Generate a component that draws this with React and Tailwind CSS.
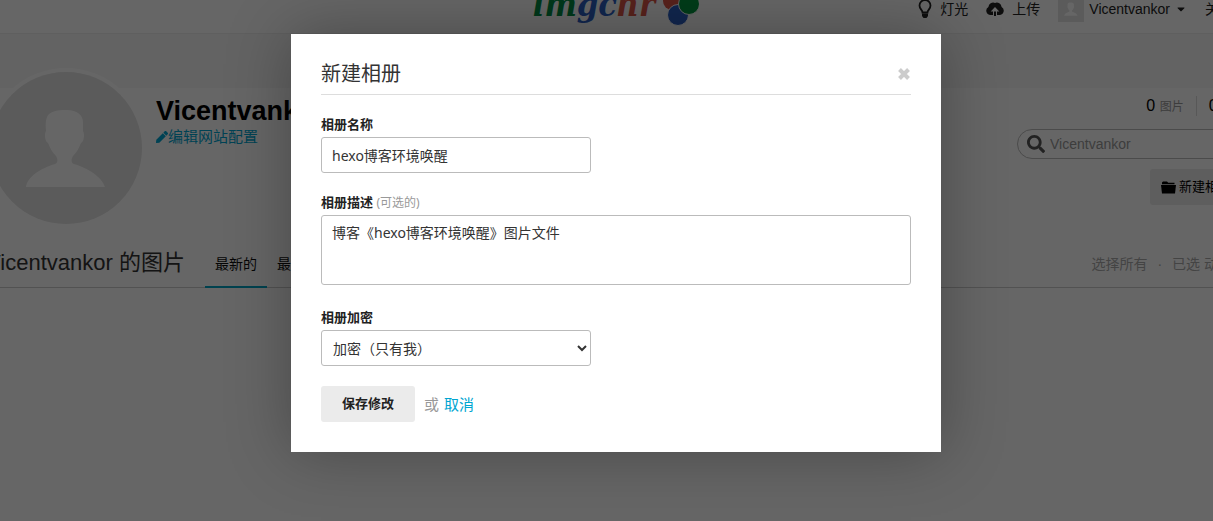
import React from "react";
import { FaCaretDown, FaSearch, FaPen } from "react-icons/fa";

const items = "flex items-center text-[#222]";

function Silhouette({ className }) {
  return (
    <svg viewBox="0 0 152 152" className={className} aria-hidden="true">
      <rect width="152" height="152" fill="#e3e3e3" />
      <path
        d="M36 115c1-10 15-19 29-23 3-1 3-5 1-8-4-4-6-8-8-13-3-1-4-9-2-12-1-8 0-14 3-17 5-4 12-4 18-4 10 0 16 5 16 12v9c2 3 1 11-2 12-2 5-4 9-8 13-2 3-2 7 1 8 14 4 28 13 31 23Z"
        fill="#ffffff"
      />
    </svg>
  );
}

function Bulb() {
  return (
    <svg viewBox="0 0 14 20" className="h-5 w-[14px]" aria-hidden="true">
      <path
        d="M4.500 13.500c0-2.500-3-3.500-3-7a5.500 5.500 0 0 1 11 0c0 3.500-3 4.500-3 7Z"
        fill="none"
        stroke="currentColor"
        strokeWidth="1.800"
      />
      <path d="M4 14.500h6v2.500l-1.500 2h-3L4 17Z" fill="currentColor" />
    </svg>
  );
}

function CloudUpload() {
  return (
    <svg viewBox="0 0 18 16" className="h-4 w-[18px]" aria-hidden="true">
      <path
        d="M4.500 14A4.300 4.300 0 0 1 2.400 6 4.800 4.800 0 0 1 9 2a4.800 4.800 0 0 1 6.600 4 4.300 4.300 0 0 1-2.100 8h-2.500v-3.500h2.300L9 6l-4.300 4.500H7V14Z"
        fill="currentColor"
      />
      <path d="M8 10.500h2V15H8z" fill="currentColor" />
    </svg>
  );
}

function Folder() {
  return (
    <svg viewBox="0 0 15 13" className="h-[13px] w-[15px]" aria-hidden="true">
      <path d="M1 3.200V1.500L2 .5h4l1.200 1.200H13.500v1.500Z" fill="currentColor" />
      <path d="M0 4h15l-1 8.500H1Z" fill="currentColor" />
    </svg>
  );
}

function Logo() {
  return (
    <a href="#home" aria-label="imgchr" className="flex items-center gap-2 pb-[10px]">
      <span className="font-['DejaVu_Serif_Condensed','DejaVu_Serif',serif] text-[34px] leading-[60px] font-bold italic">
        <span className="text-[#008c45]">im</span>
        <span className="text-[#2c5fc4]">gc</span>
        <span className="text-[#dd5548]">hr</span>
      </span>
      <svg viewBox="0 0 36 44" className="h-11 w-9" aria-hidden="true">
        <circle cx="9" cy="19" r="9" fill="#dd5548" />
        <circle cx="15" cy="33" r="10.500" fill="#2c5fc4" stroke="#fff" />
        <circle cx="26" cy="22" r="10.500" fill="#00963f" stroke="#fff" />
      </svg>
    </a>
  );
}

function Header() {
  return (
    <header className="h-[34px] border-b border-[#ededed] bg-white">
      <div className="grid h-[18px] grid-cols-[1fr_auto_1fr] grid-rows-[18px] items-center">
        <span />
        <Logo />
        <nav className="flex items-center justify-end gap-[18px] pr-[13px] text-sm whitespace-nowrap">
          <a href="#light" className={`${items} gap-2`}>
            <Bulb />灯光
          </a>
          <a href="#upload" className={`${items} gap-2`}>
            <CloudUpload />上传
          </a>
          <a href="#user" className={`${items} gap-[5px]`}>
            <Silhouette className="size-[26px]" />
            Vicentvankor
            <FaCaretDown className="size-3" />
          </a>
          <a href="#about" className={items}>关于</a>
        </nav>
      </div>
    </header>
  );
}

function Profile() {
  return (
    <section className="flex h-[202px] items-start bg-linear-to-b from-[#f8f8f8] from-[54px] to-white to-[54px] pt-[34px]">
      <div className="flex shrink-0 gap-[10px]">
        <div className="size-40 overflow-hidden rounded-full border-4 border-white">
          <Silhouette className="size-full" />
        </div>
        <div className="pt-7">
          <h1 className="text-[27px] leading-[30px] font-bold text-black">Vicentvankor</h1>
          <a href="#settings" className="flex items-center text-[15px] leading-[22px] text-[#00a5d1]">
            <FaPen className="size-3" />编辑网站配置
          </a>
        </div>
      </div>
      <div className="ml-auto flex w-[229px] flex-col items-end gap-[10px] pt-[26px]">
        <div className="flex w-full justify-end gap-3 pb-px text-base leading-6 whitespace-nowrap text-black">
          <span>0 <small className="text-xs text-[#999]">图片</small></span>
          <span className="my-0.5 w-px bg-[#dddddd]" />
          <span>0 <small className="text-xs text-[#999]">相册</small></span>
        </div>
        <label className="flex h-[30px] w-full items-center gap-[5px] rounded-full border border-[#bbb] bg-white px-[9px]">
          <FaSearch className="size-[18px] shrink-0 text-[#555]" />
          <input
            type="search"
            aria-label="搜索"
            placeholder="Vicentvankor"
            className="w-full min-w-0 text-sm outline-none placeholder:text-[#999]"
          />
        </label>
        <button className="flex h-9 items-center gap-[3px] rounded-[3px] bg-[#ebebeb] pr-[15px] pl-[11px] text-[13px] text-black">
          <Folder />新建相册
        </button>
      </div>
    </section>
  );
}

function Toolbar() {
  return (
    <div className="flex h-[52px] items-stretch border-b border-[#ccc] whitespace-nowrap">
      <h2 className="pt-3 text-[22px] leading-[30px] text-[#333]">Vicentvankor 的图片</h2>
      <nav className="ml-5 -mb-px flex text-sm text-[#111]">
        <a href="#latest" className="border-b-2 border-[#00a5c5] px-[10px] pt-[18px] leading-5">最新的</a>
        <a href="#oldest" className="px-[10px] pt-[18px] leading-5">最旧</a>
      </nav>
      <div className="ml-auto flex gap-[10px] pt-[18px] pr-[14px] text-sm leading-5 text-[#aaa]">
        <a href="#all">选择所有</a>
        <span>·</span>
        <a href="#selected">已选 动作</a>
      </div>
    </div>
  );
}

const field = "block rounded-[3px] border border-[#bbb] bg-white px-[10px] text-sm text-[#333]";
const label = "mb-1 block text-[13px] leading-[18px] font-bold text-[#222]";

function AlbumDialog() {
  return (
    <form
      role="dialog"
      aria-labelledby="dialog-title"
      onSubmit={(e) => e.preventDefault()}
      className="w-full max-w-[650px] bg-white p-[30px] font-['Noto_Sans','Noto_Sans_CJK_SC',sans-serif] shadow-[0_0_60px_rgba(0,0,0,0.3)]"
    >
      <div className="flex items-center justify-between border-b border-[#ddd] pb-[10px]">
        <h2 id="dialog-title" className="text-xl leading-5 text-[#333]">新建相册</h2>
        <button type="button" aria-label="关闭" className="text-[#ccc]">
          <svg viewBox="0 0 14 14" className="size-[14px]" aria-hidden="true">
            <path d="m2.500 2.500 9 9m0-9-9 9" stroke="currentColor" strokeWidth="4" />
          </svg>
        </button>
      </div>
      <div className="mt-5">
        <label htmlFor="name" className={label}>相册名称</label>
        <input id="name" defaultValue="hexo博客环境唤醒" className={`${field} h-9 w-[270px]`} />
      </div>
      <div className="mt-5">
        <label htmlFor="description" className={label}>
          相册描述 <span className="text-xs font-normal text-[#999]">(可选的)</span>
        </label>
        <textarea
          id="description"
          defaultValue="博客《hexo博客环境唤醒》图片文件"
          className={`${field} h-[70px] w-full resize-none py-[7px] leading-5`}
        />
      </div>
      <div className="mt-[23px]">
        <label htmlFor="privacy" className={label}>相册加密</label>
        <select id="privacy" className="block h-9 w-[270px] rounded-[3px] border border-[#bbb] bg-white pl-[7px] text-sm text-[#333]">
          <option>加密（只有我）</option>
        </select>
      </div>
      <div className="mt-5 flex items-center text-[15px] text-[#999]">
        <button type="submit" className="h-9 rounded-[3px] bg-[#ebebeb] px-[21px] text-[13px] font-bold text-[#222]">
          保存修改
        </button>
        <span className="mr-[5px] ml-[9px]">或</span>
        <a href="#cancel" className="text-[#00a5d1]">取消</a>
      </div>
    </form>
  );
}

export default function App() {
  return (
    <div className="overflow-hidden bg-white font-['Liberation_Sans','Noto_Sans_CJK_SC',sans-serif]">
      <div className="relative -mr-[33px] -ml-[14px] min-h-screen">
        <Header />
        <main>
          <Profile />
          <Toolbar />
        </main>
        <div className="absolute inset-0 flex items-start justify-center bg-black/60 pt-[34px]">
          <AlbumDialog />
        </div>
      </div>
    </div>
  );
}
